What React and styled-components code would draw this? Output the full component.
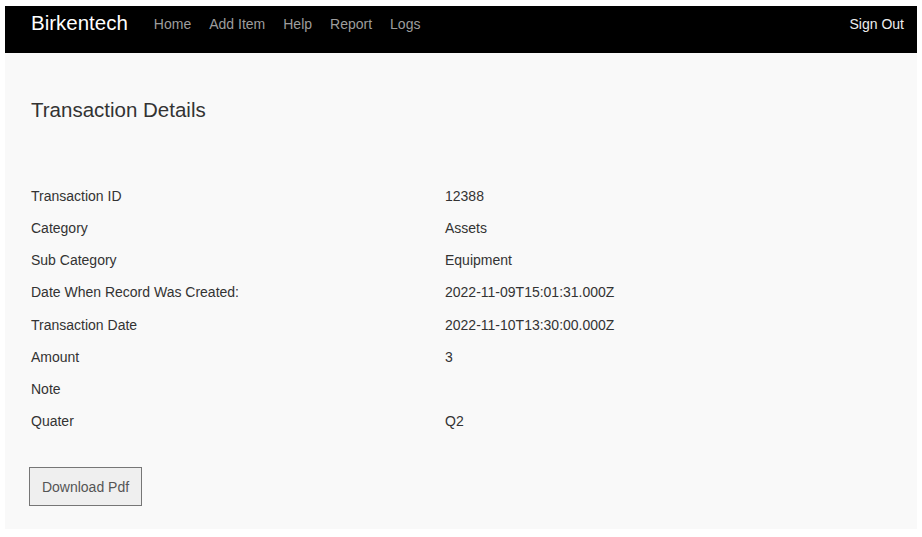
import React from 'react';
import styled, { createGlobalStyle } from 'styled-components';

const GlobalStyle = createGlobalStyle`
  body {
    margin: 0;
    background: #fff;
    font-family: 'Liberation Sans', Arial, sans-serif;
  }
`;

const Page = styled.div`
  padding: 6px 5px 8px 5px;
`;

const Navbar = styled.nav`
  display: flex;
  align-items: center;
  height: 36px;
  padding: 0 13px 11px 26px;
  background: #000;
`;

const Brand = styled.a`
  font-size: 20.5px;
  line-height: 24px;
  color: #fff;
  margin-top: -2px;
  margin-right: 26px;
  text-decoration: none;
`;

const NavLinks = styled.div`
  display: flex;
  gap: 18px;
  flex: 1;
`;

const NavLink = styled.a`
  font-size: 14px;
  line-height: 20px;
  color: ${(p) => (p.$light ? '#eee' : '#9d9d9d')};
  text-decoration: none;
`;

const Panel = styled.main`
  background: #f9f9f9;
  padding: 45px 26px 23px 26px;
  color: #333;
`;

const Title = styled.h2`
  margin: 0 0 58px 0;
  font-size: 20.5px;
  font-weight: normal;
  line-height: 24px;
`;

const Details = styled.div`
  display: grid;
  grid-template-columns: 414px 1fr;
  grid-auto-rows: 32.14px;
  align-items: center;
  font-size: 14px;
`;

const Cell = styled.div`
  line-height: 20px;
`;

const Button = styled.button`
  display: block;
  margin: 30px 0 0 -2px;
  height: 39px;
  width: 113px;
  padding: 0 11px;
  background: #efefef;
  border: 1px solid #767676;
  border-radius: 0;
  font-family: inherit;
  font-size: 14px;
  color: #555;
`;

const rows = [
  ['Transaction ID', '12388'],
  ['Category', 'Assets'],
  ['Sub Category', 'Equipment'],
  ['Date When Record Was Created:', '2022-11-09T15:01:31.000Z'],
  ['Transaction Date', '2022-11-10T13:30:00.000Z'],
  ['Amount', '3'],
  ['Note', ''],
  ['Quater', 'Q2'],
];

export default function App() {
  return (
    <Page>
      <GlobalStyle />
      <Navbar>
        <Brand href='#'>Birkentech</Brand>
        <NavLinks>
          <NavLink href='#'>Home</NavLink>
          <NavLink href='#'>Add Item</NavLink>
          <NavLink href='#'>Help</NavLink>
          <NavLink href='#'>Report</NavLink>
          <NavLink href='#'>Logs</NavLink>
        </NavLinks>
        <NavLink href='#' $light>
          Sign Out
        </NavLink>
      </Navbar>
      <Panel>
        <Title>Transaction Details</Title>
        <Details>
          {rows.map(([label, value]) => (
            <React.Fragment key={label}>
              <Cell>{label}</Cell>
              <Cell>{value}</Cell>
            </React.Fragment>
          ))}
        </Details>
        <Button>Download Pdf</Button>
      </Panel>
    </Page>
  );
}
